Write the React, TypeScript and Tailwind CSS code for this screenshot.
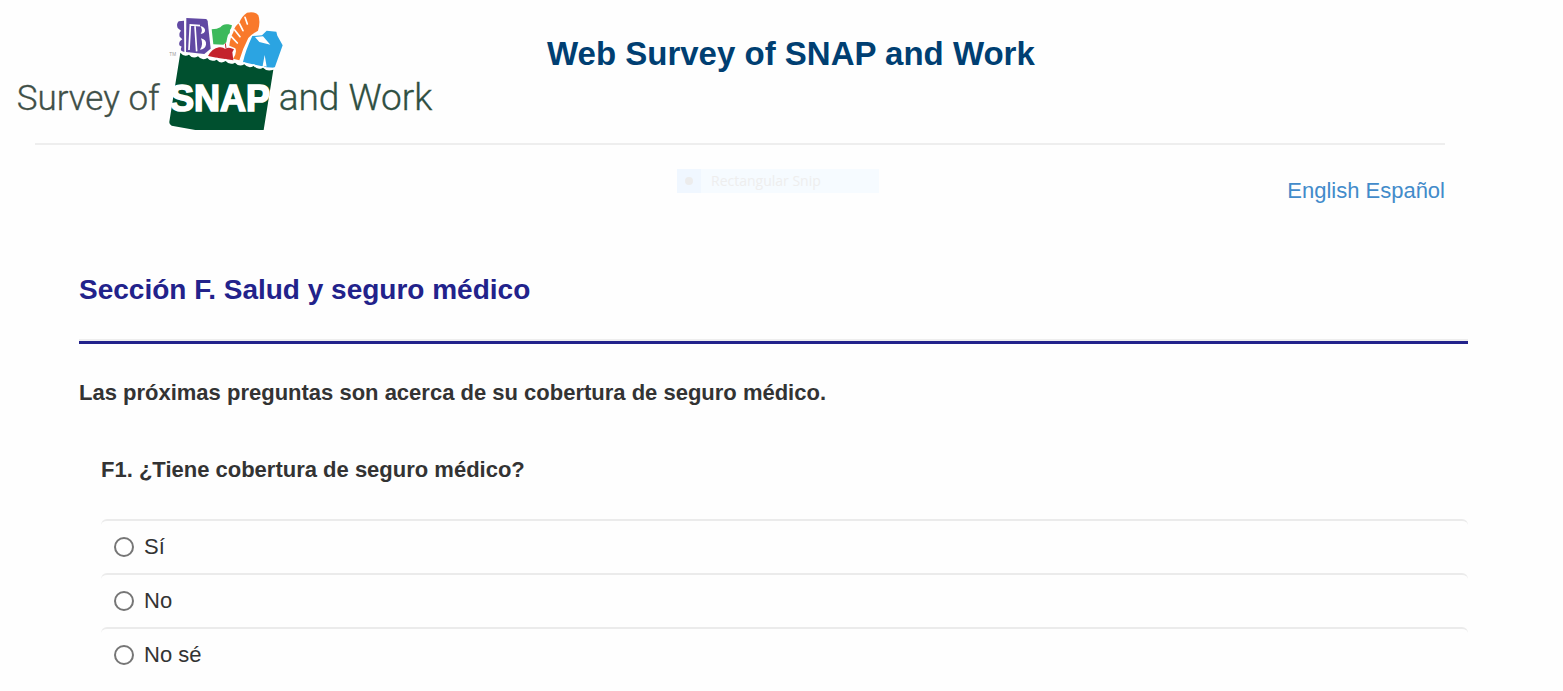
const OPTIONS = [
  { value: 'si', label: 'Sí' },
  { value: 'no', label: 'No' },
  { value: 'no-se', label: 'No sé' },
];

function Logo() {
  return (
    <svg viewBox="0 0 1350 390" className="w-[450px] h-[130px] flex-shrink-0" role="img" aria-label="Survey of SNAP and Work">
      {/* Cracker box */}
      <path d="M552 62 L536 64 Q528 72 533 84 L543 92 Q536 98 539 110 L547 118 Q535 124 538 136 L545 140 Q540 148 545 153 L553 156 Z" fill="#6149a3" />
      <path d="M559 54 L618 57 Q622 58 623 64 L632 146 L613 162 L558 156 Z" fill="#6149a3" />
      <path d="M567 150 L571 75 L600 77 M585 78 L590 154" fill="none" stroke="#fff" strokeWidth="5" />
      <path d="M601 78 Q617 82 615 94 Q612 103 602 101 Q610 92 601 78 Z M603 115 Q620 119 618 134 Q615 148 600 149 Q611 134 603 115 Z" fill="#fff" />
      {/* Greens */}
      <path d="M635 88 Q652 88 661 82 Q670 70 685 73 L696 76 Q695 84 690 90 Q692 98 684 105 Q681 114 679 127 L670 134 L640 133 Z" fill="#3cb95b" />
      {/* Bread */}
      <path d="M741 38 Q765 33 775 46 Q782 66 774 92 Q756 102 745 114 Q729 144 718 181 L699 176 Q712 158 706 145 L688 137 Q691 112 700 97 Q704 77 717 70 Q725 48 741 38 Z" fill="#f9792b" />
      <path d="M735 52 L742 72 M718 70 L729 92 M704 90 L720 110 M694 110 L712 129" fill="none" stroke="#fff" strokeWidth="5" strokeLinecap="round" />
      {/* Tomato */}
      <path d="M624 168 Q636 146 657 142 Q668 140 676 147 Q686 139 702 148 L697 157 L700 181 L650 173 Z" fill="#c4222c" />
      <path d="M678 146 L676 130" stroke="#c4222c" strokeWidth="3" />
      {/* Milk carton */}
      <path d="M757 108 L786 106 L800 92 L829 95 L832 107 L848 136 L824 203 L800 202 L729 186 Q737 150 757 108 Z" fill="#2ba4e2" />
      <path d="M765 111 L789 109 L811 134 L778 126 Z M794 165 L800 200 L788 197 Z" fill="#fff" />
      {/* Bag */}
      <path
        d="M541 158 Q552 172 567 164 Q578 178 594 169 Q605 183 622 174 Q633 188 650 179 Q661 193 677 183 Q689 197 705 188 Q717 202 733 193 Q745 207 761 198 Q773 212 789 203 Q801 216 820 209 L791 390 L586 390 L515 377 Q507 374 508 365 Z"
        fill="#00502f"
        stroke="#fff"
        strokeWidth="10"
        paintOrder="stroke"
      />
      <text x="508" y="168" fontSize="14" fill="#999" fontFamily="Liberation Sans, sans-serif">TM</text>
      <text x="50" y="331" fontSize="105" fontWeight="300" fill="#3f4f47" stroke="#3f4f47" strokeWidth="1" fontFamily="Roboto, sans-serif">Survey of</text>
      <text x="510" y="333" fontSize="108" fontWeight="700" fill="#fff" stroke="#fff" strokeWidth="5" fontFamily="Liberation Sans, sans-serif">SNAP</text>
      <text x="836" y="331" fontSize="111" fontWeight="300" fill="#2f4f41" stroke="#2f4f41" strokeWidth="1" fontFamily="Roboto, sans-serif">and Work</text>
    </svg>
  );
}

export default function App() {
  return (
    <div className="relative min-h-screen bg-[#fefefe] text-[#333] text-[22px] leading-[30px] font-['Liberation_Sans',Arial,sans-serif]">
      <header className="flex items-start">
        <Logo />
        <h1 className="ml-[97px] mt-[34px] text-[33px] leading-10 font-bold text-[#003f72] whitespace-nowrap">
          Web Survey of SNAP and Work
        </h1>
      </header>

      <div className="mt-[13px] ml-[35px] mr-[118px] border-t-2 border-[#eee]">
        <nav className="pt-[31px] flex justify-end gap-[6px] text-[#428bca]">
          <a href="#en">English</a>
          <a href="#es">Español</a>
        </nav>
      </div>

      {/* Snip mode tooltip */}
      <div className="absolute left-[677px] top-[169px] w-[202px] h-6 flex items-center bg-[#f6fbff] text-[#eee]">
        <span className="w-6 h-6 flex items-center justify-center bg-[#f0f7ff]">
          <span className="w-2 h-2 rounded-full bg-[#ececec]" />
        </span>
        <span className="ml-[10px] text-[14px] leading-6 font-['Open_Sans',sans-serif]">Rectangular Snip</span>
      </div>

      <main className="mt-[66px] ml-[79px] mr-[95px]">
        <h2 className="text-[28px] leading-9 font-bold text-[#22228b]">Sección F. Salud y seguro médico</h2>
        <div className="mt-[31px] border-t-2 border-[#eee]">
          <div className="h-[3px] bg-[#22228b]" />
        </div>

        <p className="mt-[34px] font-bold">Las próximas preguntas son acerca de su cobertura de seguro médico.</p>

        <fieldset className="mt-[47px] ml-[22px]">
          <legend className="font-bold">F1. ¿Tiene cobertura de seguro médico?</legend>
          <div className="mt-[34px]">
            {OPTIONS.map((option) => (
              <label key={option.value} className="flex items-center gap-[10px] h-[54px] px-[13px] border-t-2 border-[#ebebeb] rounded-t-md">
                <input
                  type="radio"
                  name="f1"
                  value={option.value}
                  className="appearance-none w-5 h-5 rounded-full border-2 border-[#767676] bg-white checked:border-[6px]"
                />
                <span>{option.label}</span>
              </label>
            ))}
          </div>
        </fieldset>
      </main>
    </div>
  );
}
